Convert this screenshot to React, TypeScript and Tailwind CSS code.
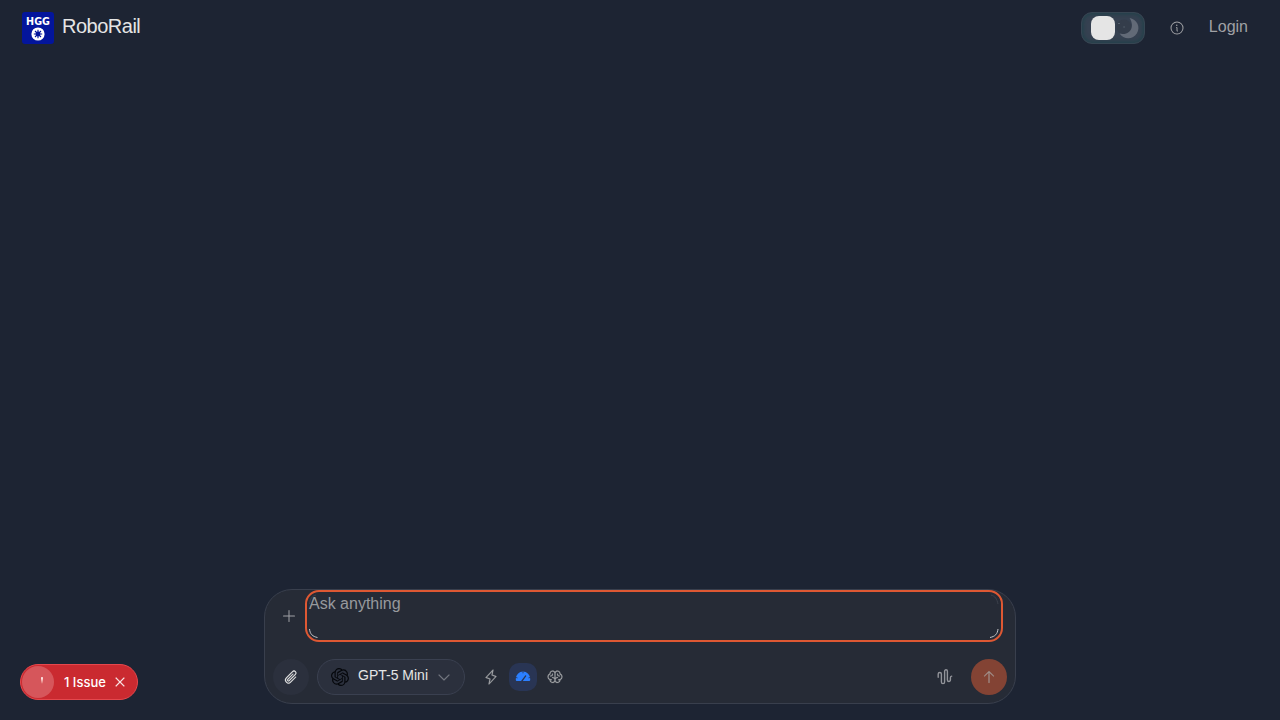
import { PiArrowUp, PiBrain, PiCaretDown, PiInfo, PiLightning, PiPaperclip, PiPlus, PiX } from "react-icons/pi";
import { SiOpenai } from "react-icons/si";

function Logo() {
  return (
    <div className="flex h-8 w-8 flex-col items-center rounded-[3px] bg-[#03159c] pt-[5px]">
      <span className="font-['DejaVu_Sans',sans-serif] text-[9.6px] leading-[10px] font-bold text-white">HGG</span>
      <svg className="h-[14px] w-[14px]" viewBox="0 0 14 14">
        <circle cx="7" cy="7" r="6.6" fill="#fff" />
        <circle cx="7" cy="7" r="2.4" fill="#03159c" />
        <path d="M7 2.8v8.4M2.8 7h8.4M4 4l6 6M10 4l-6 6" stroke="#03159c" strokeWidth="1.1" />
      </svg>
    </div>
  );
}

function ThemeSwitch() {
  return (
    <button aria-label="Theme" className="flex h-8 w-16 items-center rounded-[11px] border border-[#364552] bg-[#364151] pl-[9px] shadow-[inset_0_0_4px_1px_#1f4149]">
      <span className="h-6 w-6 shrink-0 rounded-lg bg-[#e5e5e5]" />
      <svg className="h-6 w-7" viewBox="0 0 28 24">
        <circle cx="9" cy="11" r="7.5" fill="#343d4b" />
        <path d="M14.6 2A10.2 10.2 0 1 1 4.6 17.6C11.5 19.5 18 14.5 16.8 7.8C16.4 5.4 15.6 3.5 14.6 2Z" fill="#626a77" />
        <path d="M3 7.5h2M8.3 11h1.6" stroke="#56616f" strokeWidth="1" />
      </svg>
    </button>
  );
}

function Wave() {
  return (
    <svg className="h-4 w-4" viewBox="0 0 16 16" fill="none" stroke="#92949a" strokeWidth="1.4" strokeLinecap="round" strokeLinejoin="round">
      <path d="M1.2 8.3V5.1a1.6 1.6 0 0 1 3.2 0v7.9a1.6 1.6 0 0 0 3.2 0V2.2a1.4 1.4 0 0 1 2.8 0v8.8a1.5 1.5 0 0 0 3 0V8.7q0-1.3 1.3-1.6" />
    </svg>
  );
}

function Gauge() {
  return (
    <svg className="h-4 w-4" viewBox="0 0 16 16">
      <path d="M.8 11V9.8a7.2 7.2 0 0 1 14.4 0V11q0 1-1 1H1.8q-1 0-1-1Z" fill="#2b7fff" />
      <path d="M6.9 12L10.7 6.9" stroke="#293554" strokeWidth="1.3" strokeLinecap="round" />
      <path d="M8 2.6v1.7M1 8.5l1.5.4M15 8.5l-1.5.4" stroke="#293554" strokeWidth="0.8" />
    </svg>
  );
}

export default function App() {
  return (
    <div className="flex h-screen flex-col overflow-hidden bg-[#1d2433] font-['Liberation_Sans',sans-serif] text-[#e5e5e5]">
      <header className="flex h-14 shrink-0 items-center justify-between pr-8 pl-[22px]">
        <div className="flex items-center gap-2">
          <Logo />
          <span className="-mt-[5px] text-xl tracking-tight">RoboRail</span>
        </div>
        <div className="flex items-center text-[#a0a1a5]">
          <ThemeSwitch />
          <PiInfo className="ml-6 h-4 w-4" />
          <a className="-mt-[3px] ml-6 text-base">Login</a>
        </div>
      </header>
      <main className="flex-1" />
      <footer className="relative flex h-[131px] shrink-0 justify-center">
        <section className="flex h-[115px] w-[752px] flex-col rounded-[28px] border border-[#393f4d] bg-[#262b36]">
          <div className="flex h-[53px] pl-4">
            <PiPlus className="mt-[18px] mr-2 h-4 w-4 text-[#a0a1a5]" />
            <div className="relative h-[52px] w-[698px] rounded-[14px] border-2 border-[#de5833] pl-[2px]">
              <span className="block text-base leading-[23px] text-[#97999d]">Ask anything</span>
              <svg className="absolute inset-0 h-12 w-[694px]" viewBox="0 0 694 48" fill="none">
                <path d="M2.5 37C3 42 5.5 44.5 10.5 45.5M691 37C690.5 42 688 44.5 683 45.5" stroke="#c5c6c9" />
                <path d="M684 3C688 4 690 7 691 12M2.5 12C3 7 5 4 9 3" stroke="#3b404b" />
              </svg>
            </div>
          </div>
          <div className="mt-4 flex h-9 items-center px-2">
            <button aria-label="Attach" className="flex h-9 w-9 items-center justify-center rounded-full bg-[#2b303d]">
              <PiPaperclip className="h-4 w-4 stroke-[2]" />
            </button>
            <button className="ml-2 flex h-9 w-[148px] items-center rounded-full border border-[#3a4050] bg-[#2b303d] pl-[13px] text-sm">
              <SiOpenai className="mr-[9px] h-[18px] w-[18px] text-[#05070b]" />
              <span className="-mt-[5px] whitespace-nowrap">GPT-5 Mini</span>
              <PiCaretDown className="ml-2 h-4 w-4 stroke-[4] text-[#7b7e87]" />
            </button>
            <PiLightning className="ml-[18px] h-4 w-4 stroke-[3] text-[#a0a1a5]" />
            <button aria-label="Balanced" className="ml-[10px] flex h-7 w-7 items-center justify-center rounded-[10px] bg-[#293554]">
              <Gauge />
            </button>
            <PiBrain className="ml-[10px] h-4 w-4 stroke-[3] text-[#a0a1a5]" />
            <div className="ml-auto flex items-center gap-[18px]">
              <Wave />
              <button aria-label="Send" className="flex h-9 w-9 items-center justify-center rounded-full bg-[#834334]">
                <PiArrowUp className="h-4 w-4 stroke-[3] text-[#a2938f]" />
              </button>
            </div>
          </div>
        </section>
        <aside className="absolute bottom-5 left-5 flex h-9 w-[118px] items-center rounded-full border border-[#e5484d] bg-[#ca2a30] pl-px font-[Inter,sans-serif] text-[13px] font-medium text-white">
          <span className="flex h-8 w-8 shrink-0 items-center justify-center rounded-full bg-[#d6565b] pl-2">
            <span className="mb-1 h-[7px] w-[2px] rounded-full bg-gradient-to-b from-white to-[#d6565b]" />
          </span>
          <span className="mt-[2px] ml-[10px] whitespace-nowrap">1 Issue</span>
          <PiX className="ml-[7px] h-[14px] w-[14px] stroke-[6]" />
        </aside>
      </footer>
    </div>
  );
}
